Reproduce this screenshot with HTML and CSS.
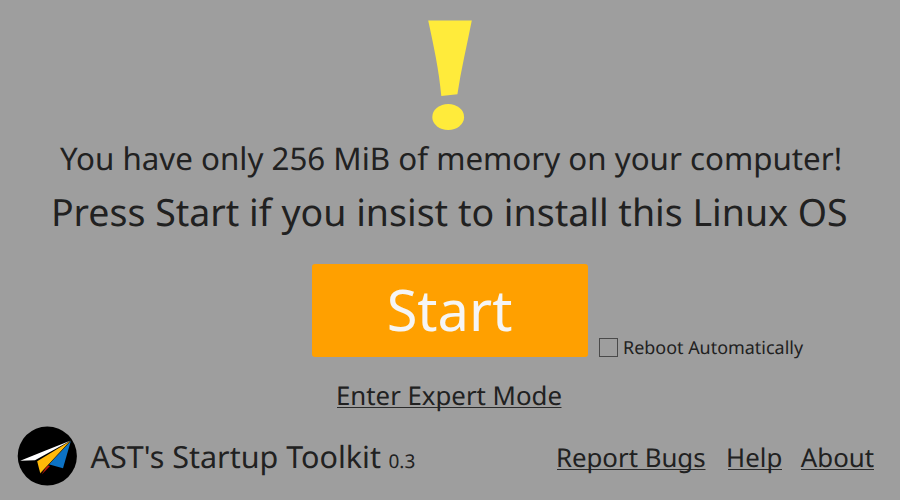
FILE: index.html
```html
<!DOCTYPE html>
<html lang="en">
<head>
<meta charset="utf-8">
<title>AST's Startup Toolkit</title>
<link rel="stylesheet" href="styles.css">
</head>
<body>
<main class="screen">
  <svg class="alert" viewBox="0 0 44 110" aria-hidden="true">
    <path d="M0.2 0.4H43.8C39 25 33 50 29.4 74.3L13.3 76C11 50 5.500 25 0.200 0.400Z"/>
    <ellipse cx="20.200" cy="97" rx="15.900" ry="13"/>
  </svg>
  <p class="notice">You have only 256 MiB of memory on your computer!</p>
  <p class="prompt">Press Start if you insist to install this Linux OS</p>
  <div class="actions">
    <button class="start" type="button">Start</button>
    <label class="reboot"><input class="box" type="checkbox"><span class="caption">Reboot Automatically</span></label>
  </div>
  <a class="link expert">Enter Expert Mode</a>
  <footer class="footer">
    <svg class="logo" viewBox="0 0 60 60" aria-hidden="true">
      <circle cx="30.300" cy="30" r="29.600" fill="#000"/>
      <path d="M3.200 34.800L28 24.800L53.800 14.600L18 34.300Z" fill="#fff"/>
      <path d="M24.700 48.500L30.300 39L33 40Z" fill="#c4160c"/>
      <path d="M53.900 14.700L31.500 38.200L46 42.200Z" fill="#0c72c4"/>
      <path d="M53.800 14.700L20.200 35.300L23.300 47.500Z" fill="#ffb909"/>
      <path d="M53.800 14.700L23.300 47.500" stroke="#000" stroke-width="0.600"/>
    </svg>
    <h1 class="title">AST's Startup Toolkit</h1>
    <span class="version">0.3</span>
    <nav class="nav">
      <a class="link">Report Bugs</a>
      <a class="link">Help</a>
      <a class="link about">About</a>
    </nav>
  </footer>
</main>
</body>
</html>
```

FILE: styles.css
```css
* { box-sizing: border-box; }
body {
  margin: 0;
  background: #9e9e9e;
  color: #212121;
  font-family: "Noto Sans", sans-serif;
  text-rendering: geometricPrecision;
}
.screen {
  width: 900px;
  height: 500px;
  padding-top: 20px;
  display: flex;
  flex-direction: column;
  align-items: center;
  overflow: hidden;
}
.alert { width: 44px; height: 110px; fill: #ffeb3b; flex: none; }
.notice, .prompt { margin: 0; white-space: nowrap; }
.notice { margin-top: 7px; padding-left: 2px; font-size: 31.3px; line-height: 44px; }
.prompt { margin-top: 5px; padding-right: 1.5px; font-size: 37.5px; line-height: 52px; }
.actions {
  width: 900px;
  height: 93px;
  margin-top: 26px;
  display: grid;
  grid-template-columns: 276px 1fr;
  column-gap: 11px;
  padding-left: 312px;
}
.start {
  border: 0;
  border-radius: 3px;
  background: #ffa000;
  color: #f5f5f5;
  font: 56px/91px "Noto Sans", sans-serif;
  padding: 0 1px 2px 0;
}
.reboot {
  align-self: end;
  display: flex;
  align-items: center;
  gap: 5px;
  height: 20px;
  font-size: 17.95px;
  line-height: 20px;
  white-space: nowrap;
}
.caption { padding-top: 2px; }
.box {
  appearance: none;
  margin: 0;
  width: 19px;
  height: 19px;
  border: 1px solid #4a4a4a;
}
.link {
  font-size: 25.8px;
  line-height: 36px;
  white-space: nowrap;
  background: linear-gradient(#2b2b2b, #2b2b2b) 1.5px 30px / calc(100% - 1.5px) 1px no-repeat;
}
.about { background-position-x: 0; background-size: 100% 1px; }
.expert { margin-top: 20px; margin-right: 2px; }
.footer {
  width: 900px;
  height: 60px;
  margin-top: 13px;
  padding: 0 26px 0 17px;
  display: flex;
  align-items: baseline;
}
.logo { width: 60px; height: 60px; flex: none; align-self: center; }
.title { margin: 0 0 0 13.5px; font-size: 30.5px; font-weight: 400; line-height: 60px; white-space: nowrap; }
.version { margin-left: 7.5px; font-size: 19px; }
.nav { align-self: flex-start; margin: 13px 0 0 auto; display: flex; gap: 20.5px; }
.nav .about { margin-left: -2px; }
```
